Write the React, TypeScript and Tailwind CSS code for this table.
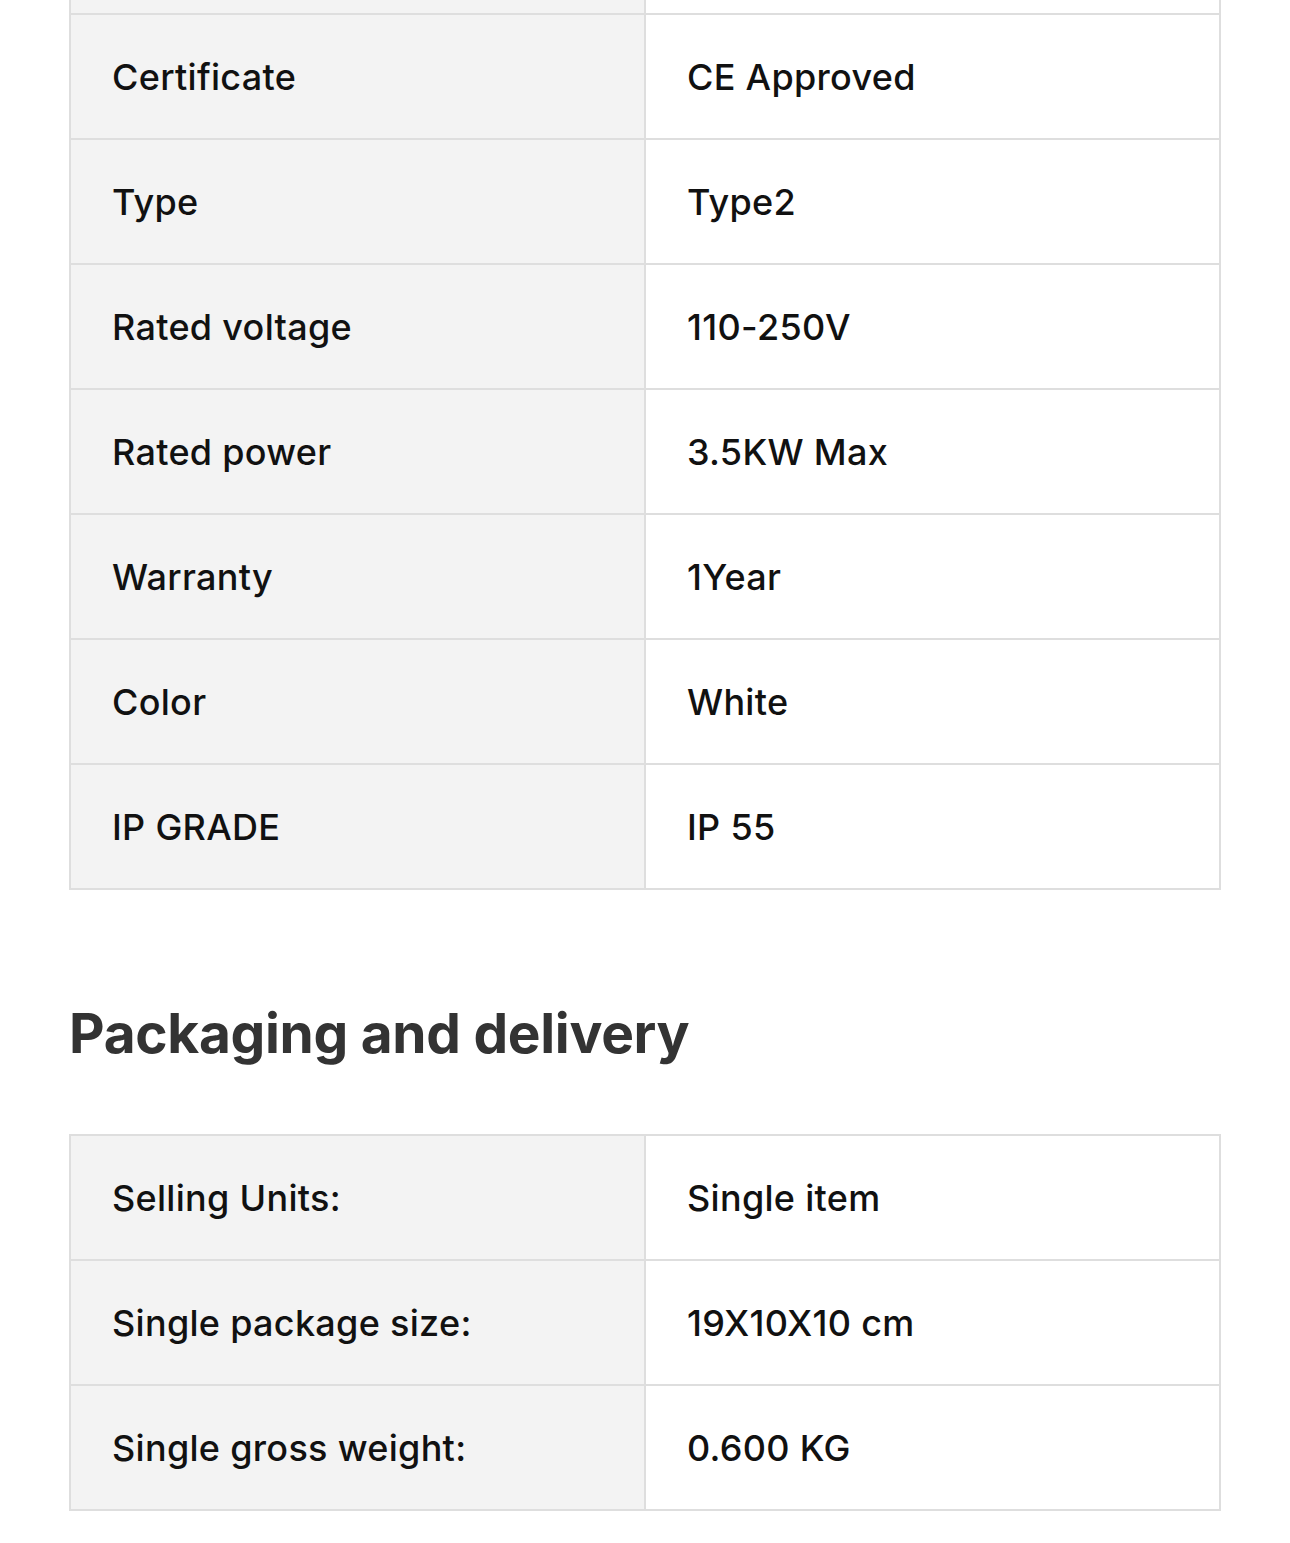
import React from 'react';

type Row = { label: string; value: string };

const specs: Row[] = [
  { label: 'Certificate', value: 'CE Approved' },
  { label: 'Type', value: 'Type2' },
  { label: 'Rated voltage', value: '110-250V' },
  { label: 'Rated power', value: '3.5KW Max' },
  { label: 'Warranty', value: '1Year' },
  { label: 'Color', value: 'White' },
  { label: 'IP GRADE', value: 'IP 55' },
];

const packaging: Row[] = [
  { label: 'Selling Units:', value: 'Single item' },
  { label: 'Single package size:', value: '19X10X10 cm' },
  { label: 'Single gross weight:', value: '0.600 KG' },
];

const SpecRow: React.FC<{ row: Row }> = ({ row }) => (
  <div className="grid h-[125px] grid-cols-[575px_1fr] border-t-2 border-[#dedede]">
    <div className="flex items-center border-r-2 border-[#dedede] bg-[#f3f3f3] pl-[41px]">{row.label}</div>
    <div className="flex items-center bg-white pl-[41px]">{row.value}</div>
  </div>
);

const App: React.FC = () => {
  return (
    <div
      className="min-h-screen bg-white px-[69px] text-[36px] font-medium tracking-[0.3px] text-[#111]"
      style={{ fontFamily: 'Inter, "Noto Sans", sans-serif' }}
    >
      <div className="border-x-2 border-b-2 border-[#dedede]">
        {/* tail of the row cut off above */}
        <div className="grid h-[13px] grid-cols-[575px_1fr]">
          <div className="border-r-2 border-[#dedede] bg-[#f3f3f3]" />
          <div className="bg-white" />
        </div>
        {specs.map((row) => (
          <SpecRow key={row.label} row={row} />
        ))}
      </div>

      <h2 className="mt-[108px] mb-[66px] text-[55px] leading-[70px] font-bold tracking-[-0.3px] text-[#333]">
        Packaging and delivery
      </h2>

      <div className="border-x-2 border-b-2 border-[#dedede]">
        {packaging.map((row) => (
          <SpecRow key={row.label} row={row} />
        ))}
      </div>
      <div className="h-[32px]" />
    </div>
  );
};

export default App;
